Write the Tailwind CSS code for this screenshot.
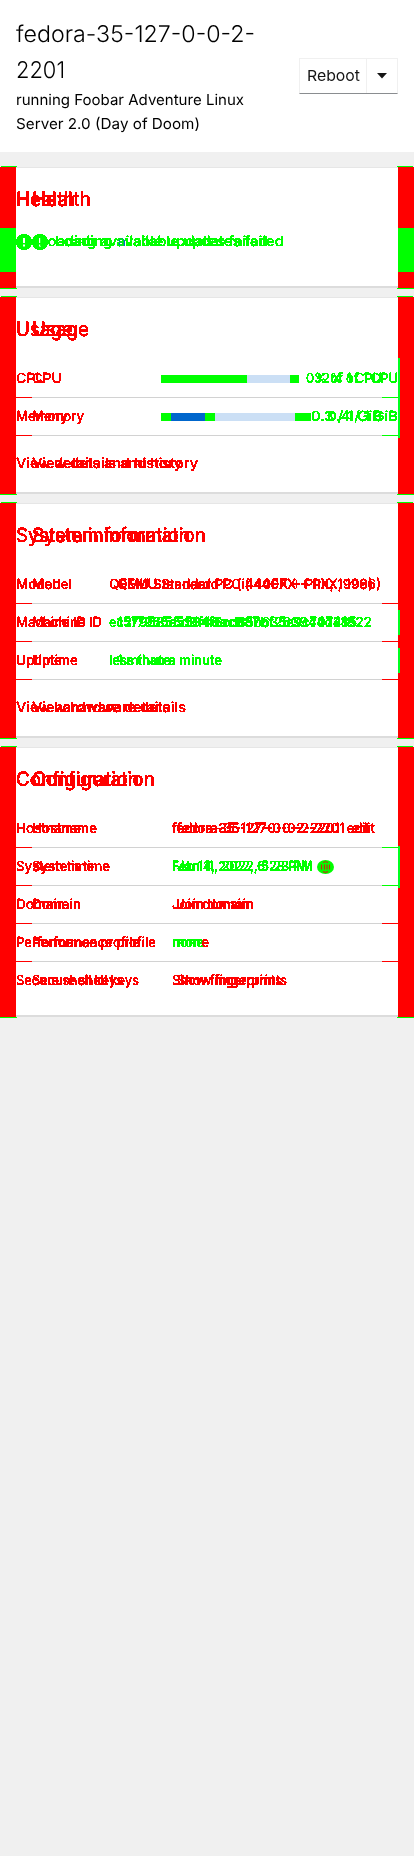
<!DOCTYPE html>
<html lang="en">
<head>
<meta charset="utf-8">
<meta name="viewport" content="width=device-width">
<title>System overview</title>
<script src="https://cdn.jsdelivr.net/npm/@tailwindcss/browser@4"></script>
</head>
<body class="min-h-[1856px] bg-[#f0f0f0] font-['Inter','Liberation_Sans',sans-serif] text-sm text-[#151515] [text-rendering:geometricPrecision]">
<svg class="absolute size-0" aria-hidden="true"><filter id="crisp" x="-5%" y="-10%" width="110%" height="120%"><feComponentTransfer><feFuncA type="discrete" tableValues="0 1 1 1"/></feComponentTransfer></filter></svg>

<header class="flex h-[152px] justify-between bg-white pt-4 pr-4 pl-4">
  <div class="whitespace-nowrap">
    <h1 class="text-[23px]/[36px] font-light text-black"><span data-w="239">fedora-35-127-0-0-2-</span><br><span data-w="49">2201</span></h1>
    <p class="text-[15px]/6 text-black"><span data-w="228">running Foobar Adventure Linux</span><br><span data-w="184">Server 2.0 (Day of Doom)</span></p>
  </div>
  <div class="mt-[42px] flex h-9 w-[99px] border border-b-[#8a8d90] border-[#f0f0f0] bg-white">
    <button class="w-[67px] border-r border-[#f0f0f0] pl-[7px] text-left text-[15px] whitespace-nowrap"><span data-w="53">Reboot</span></button>
    <button class="flex flex-1 items-center justify-center"><svg class="h-[6px] w-[10px]" viewBox="0 0 10 6"><path d="M0 0h10L5 5.5z" fill="#151515"/></svg></button>
  </div>
</header>

<main class="mt-[14px] flex flex-col gap-[7px] font-medium whitespace-nowrap">
<!-- Health -->
<section class="flex h-[123px]">
  <div class="flex w-4 flex-col"><i class="ml-px h-px w-4 shrink-0 bg-[#0f0]"></i><i class="h-[61px] bg-[#f00]"></i><i class="h-11 bg-[#0f0]"></i><i class="flex-1 bg-[#f00]"></i><i class="h-px w-[17px] bg-[#0f0]"></i></div>
  <div class="mt-px mb-px flex w-[382px] flex-col border-t border-b-2 border-t-[#e6e6e6] border-b-[#dcdcdc] bg-white pt-4">
    <h2 class="grid h-[30px] text-xl/[30px] text-[#f00] [filter:url(#crisp)]"><span class="[grid-area:1/1]"><span data-w="59">Health</span></span><span class="[grid-area:1/1] pl-4"><span data-w="59">Health</span></span></h2>
    <div class="mt-[17px] grid h-[22px] text-[#0f0] [filter:url(#crisp)]">
      <div class="[grid-area:1/1] flex items-center gap-[7px]"><svg class="size-4" viewBox="0 0 16 16"><circle cx="8" cy="8" r="8" fill="#0f0"/><path d="M7 4h2v5H7zM7 10.5h2v2H7z" fill="#fff"/></svg><span><span data-w="229">Loading av<span class="text-[#06c]">a</span>ilable updates failed</span></span></div>
      <div class="[grid-area:1/1] flex items-center gap-[7px] pl-4"><svg class="size-4" viewBox="0 0 16 16"><circle cx="8" cy="8" r="8" fill="#0f0"/><path d="M7 4h2v5H7zM7 10.5h2v2H7z" fill="#fff"/></svg><span><span data-w="229">Loading available updates failed</span></span></div>
    </div>
  </div>
  <div class="flex w-4 flex-col"><i class="-ml-px h-px w-4 shrink-0 bg-[#0f0]"></i><i class="h-[61px] bg-[#f00]"></i><i class="h-11 bg-[#0f0]"></i><i class="flex-1 bg-[#f00]"></i><i class="-ml-px h-px w-[17px] bg-[#0f0]"></i></div>
</section>

<!-- Usage -->
<section class="flex h-[199px]">
  <div class="flex w-4 flex-col"><i class="ml-px h-px w-4 shrink-0 bg-[#0f0]"></i><i class="flex-1 bg-[#f00]"></i><i class="h-px w-[17px] bg-[#0f0]"></i></div>
  <div class="mt-px mb-px flex w-[382px] flex-col border-t border-b-2 border-t-[#e6e6e6] border-b-[#dcdcdc] bg-white pt-4">
    <h2 class="mb-4 grid h-[30px] text-xl/[30px] text-[#f00] [filter:url(#crisp)]"><span class="[grid-area:1/1]"><span data-w="57">Usage</span></span><span class="[grid-area:1/1] pl-4"><span data-w="57">Usage</span></span></h2>
    <div class="flex h-[37px] items-center">
      <div class="grid w-[145px] shrink-0 text-[#f00] [filter:url(#crisp)]"><span class="[grid-area:1/1]"><span data-w="30">CPU</span></span><span class="[grid-area:1/1] pl-4"><span data-w="30">CPU</span></span></div>
      <div class="mt-px flex h-2 shrink-0"><i class="w-[86px] bg-[#0f0]"></i><i class="w-[43px] bg-[#cbdff5]"></i><i class="w-[9px] bg-[#0f0]"></i></div>
      <div class="grid flex-1 text-right text-[#0f0] [filter:url(#crisp)]"><span class="[grid-area:1/1] pr-4"><span data-w="76">0% of 1 CPU</span></span><span class="[grid-area:1/1]"><span data-w="84">32% of 1 CPU</span></span></div>
    </div>
    <div class="flex h-px"><i class="w-4 bg-[#f00]"></i><i class="flex-1 bg-[#d2d2d2]"></i><i class="w-4 bg-[#0f0]"></i></div>
    <div class="flex h-[37px] items-center">
      <div class="grid w-[145px] shrink-0 text-[#f00] [filter:url(#crisp)]"><span class="[grid-area:1/1]"><span data-w="52">Memory</span></span><span class="[grid-area:1/1] pl-4"><span data-w="52">Memory</span></span></div>
      <div class="mt-px flex h-2 shrink-0"><i class="w-[10px] bg-[#0f0]"></i><i class="w-[34px] bg-[#06c]"></i><i class="w-[10px] bg-[#0f0]"></i><i class="w-[80px] bg-[#cbdff5]"></i><i class="w-4 bg-[#0f0]"></i></div>
      <div class="grid flex-1 text-right text-[#0f0] [filter:url(#crisp)]"><span class="[grid-area:1/1] pr-4"><span data-w="71">0.3 / 1 GiB</span></span><span class="[grid-area:1/1]"><span data-w="71">0.4 / 1 GiB</span></span></div>
    </div>
    <div class="flex h-px"><i class="w-4 bg-[#f00]"></i><i class="flex-1 bg-[#d2d2d2]"></i><i class="w-4 bg-[#0f0]"></i></div>
    <div class="mt-[17px] grid h-[21px] text-sm/[21px] text-[#f00] [filter:url(#crisp)]"><span class="[grid-area:1/1]"><span data-w="166">View details and history</span></span><span class="[grid-area:1/1] pl-4"><span data-w="166">View details and history</span></span></div>
  </div>
  <div class="flex w-4 flex-col"><i class="-ml-px h-px w-4 shrink-0 bg-[#0f0]"></i><i class="h-[61px] bg-[#f00]"></i><i class="h-20 border-l-2 border-[#0f2] bg-[#f00]"></i><i class="flex-1 bg-[#f00]"></i><i class="-ml-px h-px w-[17px] bg-[#0f0]"></i></div>
</section>

<!-- System information -->
<section class="flex h-[237px]">
  <div class="flex w-4 flex-col"><i class="ml-px h-px w-4 shrink-0 bg-[#0f0]"></i><i class="flex-1 bg-[#f00]"></i><i class="h-px w-[17px] bg-[#0f0]"></i></div>
  <div class="mt-px mb-px flex w-[382px] flex-col border-t border-b-2 border-t-[#e6e6e6] border-b-[#dcdcdc] bg-white pt-4">
    <h2 class="mb-4 grid h-[30px] text-xl/[30px] text-[#f00] [filter:url(#crisp)]"><span class="[grid-area:1/1]"><span data-w="174">System information</span></span><span class="[grid-area:1/1] pl-4"><span data-w="174">System information</span></span></h2>
    <div class="flex h-[37px] items-center">
      <div class="grid w-[93px] text-[#f00] [filter:url(#crisp)]"><span class="[grid-area:1/1]"><span data-w="40">Model</span></span><span class="[grid-area:1/1] pl-4"><span data-w="40">Model</span></span></div>
      <div class="grid text-[#f00] [filter:url(#crisp)]"><span class="[grid-area:1/1]"><span data-w="264">QEMU Standard PC (i440FX + PIIX, 1996)</span></span><span class="[grid-area:1/1] pl-2"><span data-w="264">QEMU Standard PC (i440FX + PIIX, 1996)</span></span></div>
    </div>
    <div class="flex h-px"><i class="w-4 bg-[#f00]"></i><i class="flex-1 bg-[#d2d2d2]"></i><i class="w-4 bg-[#f00]"></i></div>
    <div class="flex h-[37px] items-center">
      <div class="grid w-[93px] text-[#f00] [filter:url(#crisp)]"><span class="[grid-area:1/1]"><span data-w="70">Machine ID</span></span><span class="[grid-area:1/1] pl-4"><span data-w="70">Machine ID</span></span></div>
      <div class="grid text-[#0f0] [filter:url(#crisp)]"><span class="[grid-area:1/1]"><span data-w="248">ec2f7965e5594f6cd85b635e9c74d385</span></span><span class="[grid-area:1/1] pl-2"><span data-w="255">15795855d9f46ac887bf263940741822</span></span></div>
    </div>
    <div class="flex h-px"><i class="w-4 bg-[#f00]"></i><i class="flex-1 bg-[#d2d2d2]"></i><i class="w-4 bg-[#f00]"></i></div>
    <div class="flex h-[37px] items-center">
      <div class="grid w-[93px] text-[#f00] [filter:url(#crisp)]"><span class="[grid-area:1/1]"><span data-w="46">Uptime</span></span><span class="[grid-area:1/1] pl-4"><span data-w="46">Uptime</span></span></div>
      <div class="grid text-[#0f0] [filter:url(#crisp)]"><span class="[grid-area:1/1]"><span data-w="113">less than a minute</span></span><span class="[grid-area:1/1] pl-2"><span data-w="54">1 minute</span></span></div>
    </div>
    <div class="flex h-px"><i class="w-4 bg-[#f00]"></i><i class="flex-1 bg-[#d2d2d2]"></i><i class="w-4 bg-[#f00]"></i></div>
    <div class="mt-[17px] grid h-[21px] text-sm/[21px] text-[#f00] [filter:url(#crisp)]"><span class="[grid-area:1/1]"><span data-w="154">View hardware details</span></span><span class="[grid-area:1/1] pl-4"><span data-w="154">View hardware details</span></span></div>
  </div>
  <div class="flex w-4 flex-col"><i class="-ml-px h-px w-4 shrink-0 bg-[#0f0]"></i><i class="h-[107px] bg-[#f00]"></i><i class="h-[25px] border-l-2 border-[#0f2] bg-[#f00]"></i><i class="h-[13px] bg-[#f00]"></i><i class="h-[25px] border-l-2 border-[#0f2] bg-[#f00]"></i><i class="flex-1 bg-[#f00]"></i><i class="-ml-px h-px w-[17px] bg-[#0f0]"></i></div>
</section>

<!-- Configuration -->
<section class="flex h-[272px]">
  <div class="flex w-4 flex-col"><i class="ml-px h-px w-4 shrink-0 bg-[#0f0]"></i><i class="flex-1 bg-[#f00]"></i><i class="h-px w-[17px] bg-[#0f0]"></i></div>
  <div class="mt-px mb-px flex w-[382px] flex-col border-t border-b-2 border-t-[#e6e6e6] border-b-[#dcdcdc] bg-white pt-4">
    <h2 class="mb-4 grid h-[30px] text-xl/[30px] text-[#f00] [filter:url(#crisp)]"><span class="[grid-area:1/1]"><span data-w="123">Configuration</span></span><span class="[grid-area:1/1] pl-4"><span data-w="123">Configuration</span></span></h2>
    <div class="flex h-[37px] items-center">
      <div class="grid w-[156px] text-[#f00] [filter:url(#crisp)]"><span class="[grid-area:1/1]"><span data-w="65">Hostname</span></span><span class="[grid-area:1/1] pl-4"><span data-w="65">Hostname</span></span></div>
      <div class="grid text-[#f00] [filter:url(#crisp)]"><span class="[grid-area:1/1]"><span data-w="198">fedora-35-127-0-0-2-2201 &nbsp;edit</span></span><span class="[grid-area:1/1] pl-[5px]"><span data-w="198">fedora-35-127-0-0-2-2201 &nbsp;edit</span></span></div>
    </div>
    <div class="flex h-px"><i class="w-4 bg-[#f00]"></i><i class="flex-1 bg-[#d2d2d2]"></i><i class="w-4 bg-[#0f0]"></i></div>
    <div class="flex h-[37px] items-center">
      <div class="grid w-[156px] text-[#f00] [filter:url(#crisp)]"><span class="[grid-area:1/1]"><span data-w="78">System time</span></span><span class="[grid-area:1/1] pl-4"><span data-w="78">System time</span></span></div>
      <div class="grid w-[145px] text-[#0f0] [filter:url(#crisp)]"><span class="[grid-area:1/1]"><span data-w="136">Feb 14, 2022, 6:28 PM</span></span><span class="[grid-area:1/1] pl-[5px]"><span data-w="136">Jan 11, 2022, 5:23 PM</span></span></div>
      <svg class="h-[14px] w-[17px]" viewBox="0 0 17 14"><ellipse cx="8.5" cy="7" rx="8.5" ry="7" fill="#0f0"/><path d="M4.5 4.5v5M7.5 4.5v5M10 4.5v5M12.5 4.5v5M6 2.5q2.5-1.5 5 0M6 11.5q2.5 1.5 5 0" fill="none" stroke="#c22c12" stroke-width="1.2"/></svg>
    </div>
    <div class="flex h-px"><i class="w-4 bg-[#f00]"></i><i class="flex-1 bg-[#d2d2d2]"></i><i class="w-4 bg-[#0f0]"></i></div>
    <div class="flex h-[37px] items-center">
      <div class="grid w-[156px] text-[#f00] [filter:url(#crisp)]"><span class="[grid-area:1/1]"><span data-w="49">Domain</span></span><span class="[grid-area:1/1] pl-4"><span data-w="49">Domain</span></span></div>
      <div class="grid text-[#f00] [filter:url(#crisp)]"><span class="[grid-area:1/1]"><span data-w="77">Join domain</span></span><span class="[grid-area:1/1] pl-[5px]"><span data-w="77">Join domain</span></span></div>
    </div>
    <div class="flex h-px"><i class="w-4 bg-[#f00]"></i><i class="flex-1 bg-[#d2d2d2]"></i><i class="w-4 bg-[#f00]"></i></div>
    <div class="flex h-[37px] items-center">
      <div class="grid w-[156px] text-[#f00] [filter:url(#crisp)]"><span class="[grid-area:1/1]"><span data-w="124">Performance profile</span></span><span class="[grid-area:1/1] pl-4"><span data-w="124">Performance profile</span></span></div>
      <div class="grid text-[#0f0] [filter:url(#crisp)]"><span class="[grid-area:1/1]"><span data-w="32">none</span></span><span class="[grid-area:1/1] pl-[5px]"><span data-w="32">non<span class="text-[#f00]">e</span></span></span></div>
    </div>
    <div class="flex h-px"><i class="w-4 bg-[#f00]"></i><i class="flex-1 bg-[#d2d2d2]"></i><i class="w-4 bg-[#f00]"></i></div>
    <div class="flex h-[37px] items-center">
      <div class="grid w-[156px] text-[#f00] [filter:url(#crisp)]"><span class="[grid-area:1/1]"><span data-w="107">Secure shell keys</span></span><span class="[grid-area:1/1] pl-4"><span data-w="107">Secure shell keys</span></span></div>
      <div class="grid text-[#f00] [filter:url(#crisp)]"><span class="[grid-area:1/1]"><span data-w="110">Show fingerprints</span></span><span class="[grid-area:1/1] pl-[5px]"><span data-w="110">Show fingerprints</span></span></div>
    </div>
  </div>
  <div class="flex w-4 flex-col"><i class="-ml-px h-px w-4 shrink-0 bg-[#0f0]"></i><i class="h-[99px] bg-[#f00]"></i><i class="h-[42px] border-l-2 border-[#0f2] bg-[#f00]"></i><i class="flex-1 bg-[#f00]"></i><i class="-ml-px h-px w-[17px] bg-[#0f0]"></i></div>
</section>
</main>
<script>
// Scales each label horizontally so that it fills its declared width.
// Runs again whenever the page's box changes, as it does once styles arrive.
function fitLabels() {
  document.querySelectorAll('[data-w]').forEach(function (el) {
    el.removeAttribute('style');
    var target = Number(el.dataset.w);
    var natural = el.getBoundingClientRect().width;
    el.style.display = 'inline-block';
    el.style.verticalAlign = 'top';
    el.style.width = target + 'px';
    el.style.textAlign = 'left';
    el.style.transformOrigin = 'left';
    el.style.transform = 'scaleX(' + target / natural + ')';
  });
}
window.addEventListener('load', fitLabels);
new ResizeObserver(fitLabels).observe(document.body);
</script>
</body>
</html>
